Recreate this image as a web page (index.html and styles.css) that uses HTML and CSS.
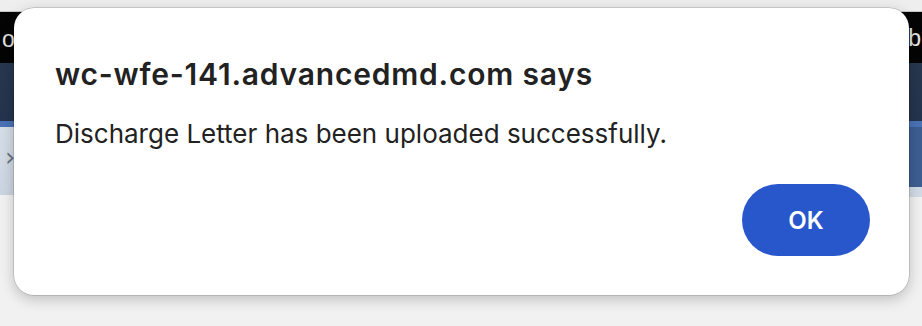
FILE: index.html
```html
<!DOCTYPE html>
<html>
<head>
<meta charset="utf-8">
<link rel="stylesheet" href="styles.css">
</head>
<body>
<div class="page">
  <div class="topstrip"></div>
  <div class="blackbar"><span class="bt-left">o</span><span class="bt-right">b</span></div>
  <div class="navybar"></div>
  <div class="bluestripe"></div>
  <div class="subrow">
    <div class="subleft"><span class="chev">›</span></div>
    <div class="subright">
      <div class="subblue"></div>
      <div class="sublight"></div>
    </div>
  </div>
  <div class="rest"></div>
</div>
<div class="dialog" role="dialog">
  <h1 class="title">wc-wfe-141.advancedmd.com says</h1>
  <p class="msg">Discharge Letter has been uploaded successfully.</p>
  <div class="actions"><button class="ok">OK</button></div>
</div>
</body>
</html>
```
FILE: styles.css
```css
html, body {
  margin: 0;
  padding: 0;
}
body {
  width: 922px;
  height: 326px;
  overflow: hidden;
  position: relative;
  background: #f1f1f1;
  font-family: Inter, "Noto Sans", sans-serif;
}
.page {
  display: flex;
  flex-direction: column;
}
.topstrip {
  height: 11px;
  background: #eeeeee;
  border-bottom: 1px solid #c4c4c4;
}
.blackbar {
  height: 51px;
  background: #040404;
  display: flex;
  justify-content: space-between;
  align-items: center;
  color: #e4e4e4;
  font-size: 23px;
  font-family: "Liberation Sans", sans-serif;
}
.bt-left { margin-left: 2px; margin-top: 4px; }
.bt-right { margin-right: 1px; margin-top: 2px; }
.navybar {
  height: 58px;
  background: linear-gradient(#27374f, #24344e);
}
.bluestripe {
  height: 6px;
  background: #4a72b5;
}
.subrow {
  display: flex;
}
.subleft {
  width: 460px;
  height: 68px;
  background: linear-gradient(#d5dde7, #cbd5e1);
  display: flex;
  align-items: center;
}
.chev {
  margin-left: 5px;
  margin-top: -8px;
  color: #6b7280;
  font-size: 26px;
  font-family: "DejaVu Sans", sans-serif;
}
.subright {
  flex: 1;
  display: flex;
  flex-direction: column;
}
.subblue {
  height: 60px;
  background: #3d5e92;
}
.sublight {
  height: 10px;
  background: #d2dbe5;
}
.rest {
  flex: 1;
}
.dialog {
  position: absolute;
  left: 14px;
  top: 8px;
  width: 895px;
  height: 287px;
  box-sizing: border-box;
  background: #ffffff;
  border-radius: 20px;
  box-shadow: 0 0 0 0.5px rgba(0,0,0,0.25), 0 4px 14px rgba(0,0,0,0.22);
  padding: 0 39px 39px 41px;
  display: flex;
  flex-direction: column;
}
.title {
  margin: 48px 0 0;
  font-size: 30px;
  font-weight: 600;
  color: #222222;
  line-height: 36px;
  letter-spacing: 0.8px;
  white-space: nowrap;
}
.msg {
  margin: 26px 0 0;
  font-size: 26px;
  font-weight: 400;
  color: #222222;
  line-height: 32px;
  white-space: nowrap;
}
.actions {
  margin-top: auto;
  display: flex;
  justify-content: flex-end;
}
.ok {
  width: 128px;
  height: 72px;
  border: none;
  border-radius: 36px;
  background: #2757cb;
  color: #ffffff;
  font-family: Inter, "Noto Sans", sans-serif;
  font-size: 24px;
  font-weight: 600;
  padding: 0;
}
```
